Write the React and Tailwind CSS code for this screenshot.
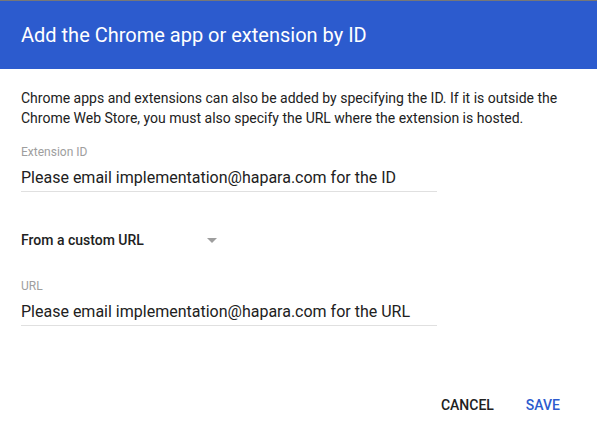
import React from 'react';

function Field({ label, value, className = '' }) {
    return (
        <div className={className}>
            <div className="text-[12px] leading-4 text-[#9e9e9e]">{label}</div>
            <div className="mt-[6px] w-[416px] border-b border-[#e0e0e0] pb-[1px] text-[16px] leading-6 text-[#212121]">
                {value}
            </div>
        </div>
    );
}

export default function App() {
    return (
        <div className="w-[597px] h-[437px] bg-white border-t border-[#777777] font-['Roboto',sans-serif] flex flex-col">
            <div className="h-[68px] bg-[#2c5bce] flex items-center px-[21px]">
                <h2 className="text-[20px] leading-7 text-white">Add the Chrome app or extension by ID</h2>
            </div>

            <div className="px-[21px] pt-[19px] flex-1 flex flex-col">
                <p className="text-[14px] leading-5 text-[#212121] whitespace-nowrap">
                    Chrome apps and extensions can also be added by specifying the ID. If it is outside the
                    <br />
                    Chrome Web Store, you must also specify the URL where the extension is hosted.
                </p>

                <Field className="mt-[16px]" label="Extension ID" value="Please email implementation@hapara.com for the ID" />

                <div className="mt-[38px] w-[196px] flex items-center justify-between">
                    <span className="text-[14px] leading-5 font-medium text-[#212121]">From a custom URL</span>
                    <span className="w-0 h-0 border-l-[5px] border-r-[5px] border-t-[5px] border-l-transparent border-r-transparent border-t-[#9e9e9e]" />
                </div>

                <Field className="mt-[28px]" label="URL" value="Please email implementation@hapara.com for the URL" />
            </div>

            <div className="flex justify-end pr-[21px] pb-[14px]">
                <button className="px-4 h-9 text-[14px] font-medium uppercase text-[#212121]">Cancel</button>
                <button className="px-4 h-9 text-[14px] font-medium uppercase text-[#2c5bce]">Save</button>
            </div>
        </div>
    );
}
